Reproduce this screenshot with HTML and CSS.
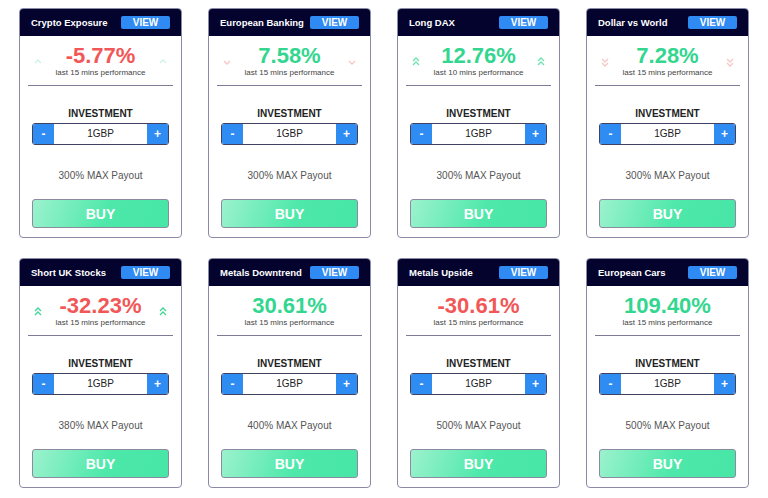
FILE: index.html
```html
<!DOCTYPE html>
<html>
<head>
  <title>Baskets</title>
  <link rel="stylesheet" href="styles.css">
</head>
<body>
  <div class="grid">

    <div class="card">
      <div class="card-head">
        <span class="title">Crypto Exposure</span>
        <button class="view">VIEW</button>
      </div>
      <div class="perf">
        <svg class="chev faint-green" viewBox="0 0 8 10"><polyline points="1,6 4,3 7,6"/></svg>
        <div class="perf-mid">
          <div class="value red">-5.77%</div>
          <div class="sub">last 15 mins performance</div>
        </div>
        <svg class="chev faint-green" viewBox="0 0 8 10"><polyline points="1,6 4,3 7,6"/></svg>
      </div>
      <div class="divider"></div>
      <div class="label">INVESTMENT</div>
      <div class="stepper"><span class="step">-</span><span class="amount">1GBP</span><span class="step">+</span></div>
      <div class="payout">300% MAX Payout</div>
      <button class="buy">BUY</button>
    </div>

    <div class="card">
      <div class="card-head">
        <span class="title">European Banking</span>
        <button class="view">VIEW</button>
      </div>
      <div class="perf">
        <svg class="chev faint-red" viewBox="0 0 8 10"><polyline points="1,4 4,7 7,4"/></svg>
        <div class="perf-mid">
          <div class="value green">7.58%</div>
          <div class="sub">last 15 mins performance</div>
        </div>
        <svg class="chev faint-red" viewBox="0 0 8 10"><polyline points="1,4 4,7 7,4"/></svg>
      </div>
      <div class="divider"></div>
      <div class="label">INVESTMENT</div>
      <div class="stepper"><span class="step">-</span><span class="amount">1GBP</span><span class="step">+</span></div>
      <div class="payout">300% MAX Payout</div>
      <button class="buy">BUY</button>
    </div>

    <div class="card">
      <div class="card-head">
        <span class="title">Long DAX</span>
        <button class="view">VIEW</button>
      </div>
      <div class="perf">
        <svg class="chev mid-green" viewBox="0 0 8 10"><polyline points="1,4 4,1 7,4"/><polyline points="1,8 4,5 7,8"/></svg>
        <div class="perf-mid">
          <div class="value green">12.76%</div>
          <div class="sub">last 10 mins performance</div>
        </div>
        <svg class="chev mid-green" viewBox="0 0 8 10"><polyline points="1,4 4,1 7,4"/><polyline points="1,8 4,5 7,8"/></svg>
      </div>
      <div class="divider"></div>
      <div class="label">INVESTMENT</div>
      <div class="stepper"><span class="step">-</span><span class="amount">1GBP</span><span class="step">+</span></div>
      <div class="payout">300% MAX Payout</div>
      <button class="buy">BUY</button>
    </div>

    <div class="card">
      <div class="card-head">
        <span class="title">Dollar vs World</span>
        <button class="view">VIEW</button>
      </div>
      <div class="perf">
        <svg class="chev faint-red" viewBox="0 0 8 10"><polyline points="1,2 4,5 7,2"/><polyline points="1,6 4,9 7,6"/></svg>
        <div class="perf-mid">
          <div class="value green">7.28%</div>
          <div class="sub">last 15 mins performance</div>
        </div>
        <svg class="chev faint-red" viewBox="0 0 8 10"><polyline points="1,2 4,5 7,2"/><polyline points="1,6 4,9 7,6"/></svg>
      </div>
      <div class="divider"></div>
      <div class="label">INVESTMENT</div>
      <div class="stepper"><span class="step">-</span><span class="amount">1GBP</span><span class="step">+</span></div>
      <div class="payout">300% MAX Payout</div>
      <button class="buy">BUY</button>
    </div>

    <div class="card">
      <div class="card-head">
        <span class="title">Short UK Stocks</span>
        <button class="view">VIEW</button>
      </div>
      <div class="perf">
        <svg class="chev green-chev" viewBox="0 0 8 10"><polyline points="1,4 4,1 7,4"/><polyline points="1,8 4,5 7,8"/></svg>
        <div class="perf-mid">
          <div class="value red">-32.23%</div>
          <div class="sub">last 15 mins performance</div>
        </div>
        <svg class="chev green-chev" viewBox="0 0 8 10"><polyline points="1,4 4,1 7,4"/><polyline points="1,8 4,5 7,8"/></svg>
      </div>
      <div class="divider"></div>
      <div class="label">INVESTMENT</div>
      <div class="stepper"><span class="step">-</span><span class="amount">1GBP</span><span class="step">+</span></div>
      <div class="payout">380% MAX Payout</div>
      <button class="buy">BUY</button>
    </div>

    <div class="card">
      <div class="card-head">
        <span class="title">Metals Downtrend</span>
        <button class="view">VIEW</button>
      </div>
      <div class="perf">
        <span class="chev"></span>
        <div class="perf-mid">
          <div class="value green">30.61%</div>
          <div class="sub">last 15 mins performance</div>
        </div>
        <span class="chev"></span>
      </div>
      <div class="divider"></div>
      <div class="label">INVESTMENT</div>
      <div class="stepper"><span class="step">-</span><span class="amount">1GBP</span><span class="step">+</span></div>
      <div class="payout">400% MAX Payout</div>
      <button class="buy">BUY</button>
    </div>

    <div class="card">
      <div class="card-head">
        <span class="title">Metals Upside</span>
        <button class="view">VIEW</button>
      </div>
      <div class="perf">
        <span class="chev"></span>
        <div class="perf-mid">
          <div class="value red">-30.61%</div>
          <div class="sub">last 15 mins performance</div>
        </div>
        <span class="chev"></span>
      </div>
      <div class="divider"></div>
      <div class="label">INVESTMENT</div>
      <div class="stepper"><span class="step">-</span><span class="amount">1GBP</span><span class="step">+</span></div>
      <div class="payout">500% MAX Payout</div>
      <button class="buy">BUY</button>
    </div>

    <div class="card">
      <div class="card-head">
        <span class="title">European Cars</span>
        <button class="view">VIEW</button>
      </div>
      <div class="perf">
        <span class="chev"></span>
        <div class="perf-mid">
          <div class="value green">109.40%</div>
          <div class="sub">last 15 mins performance</div>
        </div>
        <span class="chev"></span>
      </div>
      <div class="divider"></div>
      <div class="label">INVESTMENT</div>
      <div class="stepper"><span class="step">-</span><span class="amount">1GBP</span><span class="step">+</span></div>
      <div class="payout">500% MAX Payout</div>
      <button class="buy">BUY</button>
    </div>

  </div>
</body>
</html>
```

FILE: styles.css
```css
body {
  margin: 0;
  background-color: #ffffff;
  font-family: "Liberation Sans", Arial, sans-serif;
}

.grid {
  display: grid;
  grid-template-columns: repeat(4, 163px);
  column-gap: 26px;
  row-gap: 20px;
  padding: 8px 0 0 19px;
}

.card {
  box-sizing: border-box;
  height: 230px;
  border: 1px solid #8a8aa6;
  border-radius: 4px;
  overflow: hidden;
  display: flex;
  flex-direction: column;
}

.card-head {
  height: 27px;
  background-color: #03032e;
  display: flex;
  align-items: center;
  justify-content: space-between;
  padding: 0 11px 0 11px;
}

.title {
  color: #ffffff;
  font-size: 9.5px;
  font-weight: bold;
}

.view {
  width: 49px;
  height: 13px;
  padding: 0;
  border: none;
  border-radius: 2px;
  background-color: #2f8af3;
  color: #ffffff;
  font-family: "Liberation Sans", Arial, sans-serif;
  font-size: 10px;
  font-weight: bold;
  line-height: 13px;
}

.perf {
  display: flex;
  align-items: center;
  justify-content: space-between;
  padding: 8px 14px 0 14px;
}

.perf-mid {
  text-align: center;
}

.chev {
  width: 8px;
  height: 10px;
  margin-top: 1px;
  fill: none;
  stroke-width: 1.3;
}

.faint-green { stroke: #cdf3e2; }
.mid-green { stroke: #6fe2b2; }
.green-chev { stroke: #3fd598; }
.faint-red { stroke: #f6c6c6; }

.value {
  font-size: 22px;
  font-weight: bold;
  line-height: 24px;
}

.red { color: #f25757; }
.green { color: #33d68f; }

.sub {
  font-size: 8px;
  line-height: 10px;
  color: #444444;
}

.divider {
  height: 1px;
  background-color: #7c7c96;
  margin: 7px 8px 0 8px;
}

.label {
  margin-top: 22px;
  text-align: center;
  font-size: 10px;
  font-weight: bold;
  line-height: 12px;
  color: #222222;
}

.stepper {
  box-sizing: border-box;
  height: 22px;
  margin: 3px 12px 0 12px;
  display: flex;
  border: 1px solid #404060;
  border-radius: 3px;
  overflow: hidden;
}

.step {
  width: 21px;
  background-color: #2f8cf3;
  color: #ffffff;
  font-size: 12px;
  font-weight: bold;
  display: flex;
  align-items: center;
  justify-content: center;
}

.amount {
  flex: 1;
  text-align: center;
  font-size: 10px;
  line-height: 20px;
  color: #222222;
}

.payout {
  margin-top: 25px;
  text-align: center;
  font-size: 10px;
  line-height: 12px;
  color: #555555;
}

.buy {
  box-sizing: border-box;
  height: 29px;
  margin: 17px 12px 0 12px;
  border: 1px solid #8a8aa0;
  border-radius: 3px;
  background: linear-gradient(110deg, #9cf2cd 0%, #4de8aa 55%, #47e6a6 100%);
  color: #ffffff;
  font-family: "Liberation Sans", Arial, sans-serif;
  font-size: 14px;
  font-weight: bold;
  cursor: pointer;
}
```
